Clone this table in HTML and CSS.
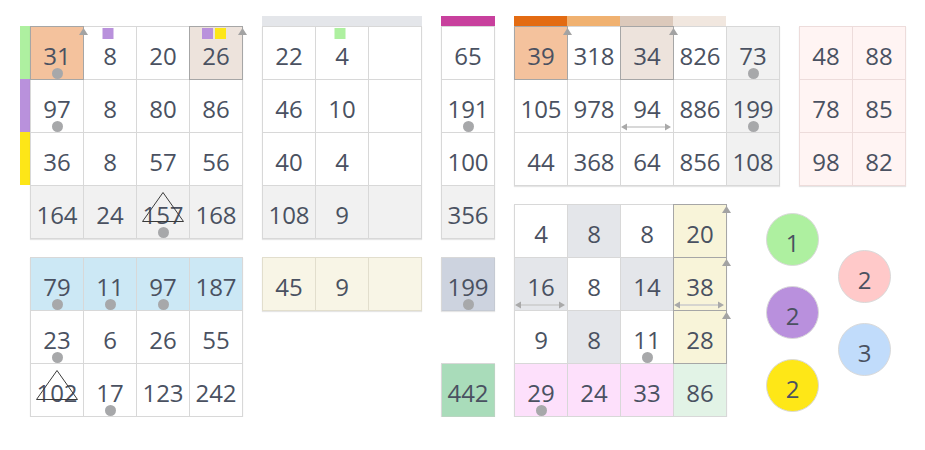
FILE: index.html
```html
<!DOCTYPE html>
<html>
<head>
<meta charset="utf-8">
<link rel="stylesheet" href="styles.css">
</head>
<body>
<div class="page">
  <div class="col col-a">
    <div class="block-side">
      <div class="side-bars">
        <span class="sbar green"></span>
        <span class="sbar purple"></span>
        <span class="sbar yellow"></span>
      </div>
      <div class="grid c4">
        <div class="cell orange hl">31<i class="dot"></i><i class="corner"></i></div>
        <div class="cell">8<span class="sqs"><i class="sq purple"></i></span></div>
        <div class="cell">20</div>
        <div class="cell beige hl">26<span class="sqs"><i class="sq purple"></i><i class="sq yellow"></i></span><i class="corner"></i></div>
        <div class="cell">97<i class="dot"></i></div>
        <div class="cell">8</div>
        <div class="cell">80</div>
        <div class="cell">86</div>
        <div class="cell">36</div>
        <div class="cell">8</div>
        <div class="cell">57</div>
        <div class="cell">56</div>
        <div class="cell gray">164</div>
        <div class="cell gray">24</div>
        <div class="cell gray">157<svg class="tri-out" viewBox="0 0 42 30"><polygon points="21,0.5 0.5,29.5 41.5,29.5"/></svg><i class="dot"></i></div>
        <div class="cell gray">168</div>
      </div>
    </div>
    <div class="grid c4 bl">
      <div class="cell blue">79<i class="dot"></i></div>
      <div class="cell blue">11<i class="dot"></i></div>
      <div class="cell blue">97<i class="dot"></i></div>
      <div class="cell blue">187</div>
      <div class="cell">23<i class="dot"></i></div>
      <div class="cell">6</div>
      <div class="cell">26</div>
      <div class="cell">55</div>
      <div class="cell">102<svg class="tri-out" viewBox="0 0 42 30"><polygon points="21,0.5 0.5,29.5 41.5,29.5"/></svg></div>
      <div class="cell">17<i class="dot"></i></div>
      <div class="cell">123</div>
      <div class="cell">242</div>
    </div>
  </div>

  <div class="col col-b">
    <div class="topbar graybar"></div>
    <div class="grid c3">
      <div class="cell">22</div>
      <div class="cell">4<span class="sqs"><i class="sq green"></i></span></div>
      <div class="cell"></div>
      <div class="cell">46</div>
      <div class="cell">10</div>
      <div class="cell"></div>
      <div class="cell">40</div>
      <div class="cell">4</div>
      <div class="cell"></div>
      <div class="cell gray">108</div>
      <div class="cell gray">9</div>
      <div class="cell gray"></div>
    </div>
    <div class="grid c3 cream-grid">
      <div class="cell cream">45</div>
      <div class="cell cream">9</div>
      <div class="cell cream"></div>
    </div>
  </div>

  <div class="col col-c">
    <div class="topbar magenta"></div>
    <div class="grid c1">
      <div class="cell">65</div>
      <div class="cell">191<i class="dot"></i></div>
      <div class="cell">100</div>
      <div class="cell gray">356</div>
    </div>
    <div class="grid c1 single-199">
      <div class="cell slate">199<i class="dot"></i></div>
    </div>
    <div class="grid c1 single-442">
      <div class="cell mint">442</div>
    </div>
  </div>

  <div class="col col-d">
    <div class="row-top">
      <div class="block-top">
        <div class="topbars">
          <span class="tbar o1"></span>
          <span class="tbar o2"></span>
          <span class="tbar o3"></span>
          <span class="tbar o4"></span>
        </div>
        <div class="grid c5">
          <div class="cell orange hl">39<i class="corner"></i></div>
          <div class="cell">318</div>
          <div class="cell beige hl">34<i class="corner"></i></div>
          <div class="cell">826</div>
          <div class="cell gray">73<i class="dot"></i></div>
          <div class="cell">105</div>
          <div class="cell">978</div>
          <div class="cell">94<svg class="dbl" viewBox="0 0 50 8"><line x1="4" y1="4" x2="46" y2="4"/><path d="M0 4 L6 0.5 L6 7.5 Z M50 4 L44 0.5 L44 7.5 Z"/></svg></div>
          <div class="cell">886</div>
          <div class="cell gray">199<i class="dot"></i></div>
          <div class="cell">44</div>
          <div class="cell">368</div>
          <div class="cell">64</div>
          <div class="cell">856</div>
          <div class="cell gray">108</div>
        </div>
      </div>
      <div class="grid c2 pink-grid">
        <div class="cell pinkish">48</div>
        <div class="cell pinkish">88</div>
        <div class="cell pinkish">78</div>
        <div class="cell pinkish">85</div>
        <div class="cell pinkish">98</div>
        <div class="cell pinkish">82</div>
      </div>
    </div>
    <div class="row-bottom">
      <div class="grid c4">
        <div class="cell">4</div>
        <div class="cell lgray">8</div>
        <div class="cell">8</div>
        <div class="cell lemon hl">20<i class="corner"></i></div>
        <div class="cell lgray">16<svg class="dbl" viewBox="0 0 50 8"><line x1="4" y1="4" x2="46" y2="4"/><path d="M0 4 L6 0.5 L6 7.5 Z M50 4 L44 0.5 L44 7.5 Z"/></svg></div>
        <div class="cell">8</div>
        <div class="cell lgray">14</div>
        <div class="cell lemon hl">38<i class="corner"></i><svg class="dbl" viewBox="0 0 50 8"><line x1="4" y1="4" x2="46" y2="4"/><path d="M0 4 L6 0.5 L6 7.5 Z M50 4 L44 0.5 L44 7.5 Z"/></svg></div>
        <div class="cell">9</div>
        <div class="cell lgray">8</div>
        <div class="cell">11<i class="dot"></i></div>
        <div class="cell lemon hl">28<i class="corner"></i></div>
        <div class="cell rose">29<i class="dot"></i><i class="below"></i></div>
        <div class="cell rose">24<i class="below"></i></div>
        <div class="cell rose">33<i class="below"></i></div>
        <div class="cell sage">86</div>
      </div>
      <div class="circles">
        <div class="circ-col left">
          <div class="circle c-green">1</div>
          <div class="circle c-purple">2</div>
          <div class="circle c-yellow">2</div>
        </div>
        <div class="circ-col right">
          <div class="circle c-pink">2</div>
          <div class="circle c-blue">3</div>
        </div>
      </div>
    </div>
  </div>
</div>
</body>
</html>
```
FILE: styles.css
```css
html, body {
  margin: 0;
  background: #ffffff;
}
body {
  font-family: "Open Sans", "Noto Sans", sans-serif;
  color: #4a5161;
}
.page {
  display: flex;
  align-items: flex-start;
  gap: 19px;
  padding: 16px 0 0 20px;
}
.col {
  display: flex;
  flex-direction: column;
  align-items: flex-start;
}

/* grids */
.grid {
  display: grid;
  grid-auto-rows: 53px;
  border-left: 1px solid #d8d8d8;
  border-top: 1px solid #d8d8d8;
  box-shadow: 0 1px 1px rgba(0, 0, 0, 0.10);
}
.c1 { grid-template-columns: 53px; }
.c2 { grid-template-columns: repeat(2, 53px); }
.c3 { grid-template-columns: repeat(3, 53px); }
.c4 { grid-template-columns: repeat(4, 53px); }
.c5 { grid-template-columns: repeat(5, 53px); }

.cell {
  position: relative;
  box-sizing: border-box;
  border-right: 1px solid #d8d8d8;
  border-bottom: 1px solid #d8d8d8;
  background: #ffffff;
  display: flex;
  align-items: center;
  justify-content: center;
  padding-top: 6px;
  font-size: 24px;
  line-height: 1;
}
.cell.hl::after {
  content: "";
  position: absolute;
  top: -1px;
  left: -1px;
  right: -1px;
  bottom: -1px;
  border: 1px solid #a6a6a6;
  z-index: 1;
}

/* cell colours */
.orange { background: #f4c29d; }
.beige { background: #ede3dc; }
.gray { background: #f1f1f1; }
.blue { background: #cce8f5; }
.cream { background: #f8f5e6; border-color: #e2decd; }
.cream-grid { border-color: #e2decd; margin-top: 18px; }
.slate { background: #cdd3df; border-color: #c5cad3; }
.mint { background: #a9dcba; border-color: #b9d5c1; }
.pinkish { background: #fff4f3; border-color: #eddcdb; }
.pink-grid { border-color: #eddcdb; margin-top: 10px; }
.lgray { background: #e4e6ea; }
.lemon { background: #f8f4d9; }
.rose { background: #fde0fb; }
.sage { background: #e2f3e6; }

/* markers */
.dot {
  position: absolute;
  left: 50%;
  bottom: 0;
  width: 11px;
  height: 11px;
  margin-left: -5.5px;
  border-radius: 50%;
  background: #a7a8aa;
  z-index: 2;
}
.corner {
  position: absolute;
  top: 1px;
  right: -5px;
  width: 9px;
  height: 7px;
  background: #a3a3a3;
  clip-path: polygon(50% 0, 100% 100%, 0 100%);
  z-index: 3;
}
.below {
  position: absolute;
  left: 50%;
  bottom: -8px;
  width: 11px;
  height: 7px;
  margin-left: -5.5px;
  background: #a3a3a3;
  clip-path: polygon(50% 0, 100% 100%, 0 100%);
  z-index: 3;
}
.sqs {
  position: absolute;
  top: 1px;
  left: 50%;
  transform: translateX(calc(-50% - 2px));
  display: flex;
  gap: 2px;
  z-index: 2;
}
.sq {
  width: 11px;
  height: 11px;
  display: block;
}
.sq.purple { background: #b991dc; }
.sq.yellow { background: #fde618; }
.sq.green { background: #aef0a0; }
.tri-out {
  position: absolute;
  top: 6px;
  left: 50%;
  width: 42px;
  height: 30px;
  margin-left: -21px;
  z-index: 2;
}
.tri-out polygon {
  fill: none;
  stroke: #3a3a3a;
  stroke-width: 1;
}
.dbl {
  position: absolute;
  left: 0;
  bottom: 1px;
  width: 50px;
  height: 8px;
  z-index: 2;
}
.dbl line {
  stroke: #cbcbcb;
  stroke-width: 1.5;
}
.dbl path {
  fill: #a9a9a9;
}

/* column A */
.block-side {
  display: flex;
  margin-top: 10px;
}
.side-bars {
  display: flex;
  flex-direction: column;
  width: 10px;
}
.sbar {
  display: block;
  height: 53px;
}
.sbar.green { background: #aef0a0; }
.sbar.purple { background: #b991dc; }
.sbar.yellow { background: #fde618; }
.bl {
  margin-top: 18px;
  margin-left: 10px;
}

/* top bars */
.topbar {
  height: 10px;
  align-self: stretch;
}
.graybar { background: #e4e6ea; }
.magenta { background: #c8409d; }

/* column C */
.single-199 { margin-top: 18px; }
.single-442 { margin-top: 52px; }

/* column D */
.row-top {
  display: flex;
  align-items: flex-start;
  gap: 19px;
}
.topbars {
  display: flex;
  height: 10px;
}
.tbar {
  display: block;
  width: 53px;
  height: 10px;
}
.tbar.o1 { background: #e36b12; }
.tbar.o2 { background: #f0b170; }
.tbar.o3 { background: #dcc9bb; }
.tbar.o4 { background: #f1e7df; }
.row-bottom {
  display: flex;
  align-items: flex-start;
  margin-top: 18px;
}
.circles {
  display: flex;
  gap: 19px;
  margin-left: 39px;
}
.circ-col {
  display: flex;
  flex-direction: column;
  gap: 20px;
}
.circ-col.left { margin-top: 9px; }
.circ-col.right { margin-top: 46px; }
.circle {
  box-sizing: border-box;
  width: 53px;
  height: 53px;
  border-radius: 50%;
  border: 1px solid #d9d9d9;
  display: flex;
  align-items: center;
  justify-content: center;
  padding-top: 6px;
  font-size: 24px;
  line-height: 1;
}
.c-green { background: #aef0a0; }
.c-purple { background: #b990dd; }
.c-yellow { background: #fee717; }
.c-pink { background: #ffc9c9; }
.c-blue { background: #c1dcfb; }
```
